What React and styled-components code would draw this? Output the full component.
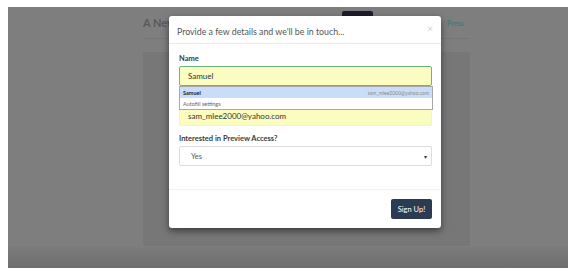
import React from "react";
import styled, { createGlobalStyle } from "styled-components";

const GlobalStyle = createGlobalStyle`
  html, body { margin: 0; padding: 0; background: #fff; }
  body { font-family: "Lato", "Open Sans", sans-serif; }
  * { box-sizing: border-box; }
`;

export default function App() {
  return (
    <>
      <GlobalStyle />
      <Frame>
        <PageArea>
          <Container>
            <SiteHeader>
              <SiteTitle>A New Era</SiteTitle>
              <NavButton />
              <PressLink>Press</PressLink>
            </SiteHeader>
            <Panel />
          </Container>
        </PageArea>
        <BottomBand />

        <Modal>
          <ModalHeader>
            <ModalTitle>Provide a few details and we'll be in touch...</ModalTitle>
            <CloseButton>×</CloseButton>
          </ModalHeader>
          <ModalBody>
            <FormGroup>
              <Label>Name</Label>
              <Input autofilled focused>Samuel</Input>
              <Autofill>
                <AutofillRow selected>
                  <strong>Samuel</strong>
                  <AutofillHint>sam_mlee2000@yahoo.com</AutofillHint>
                </AutofillRow>
                <AutofillRow>Autofill settings</AutofillRow>
              </Autofill>
            </FormGroup>
            <FormGroup>
              <LabelSpace />
              <Input autofilled>sam_mlee2000@yahoo.com</Input>
            </FormGroup>
            <FormGroup>
              <Label>Interested in Preview Access?</Label>
              <Select>
                <span>Yes</span>
                <Caret>▾</Caret>
              </Select>
            </FormGroup>
          </ModalBody>
          <ModalFooter>
            <PrimaryButton>Sign Up!</PrimaryButton>
          </ModalFooter>
        </Modal>
      </Frame>
    </>
  );
}

const Frame = styled.div`
  position: relative;
  margin: 7px 0 0 8px;
  width: 560px;
  height: 261px;
  background: #7e7e7e;
  display: flex;
  flex-direction: column;
  overflow: hidden;
`;

const PageArea = styled.div`
  flex: 1;
  padding-left: 135px;
`;

const Container = styled.div`
  width: 327px;
  display: flex;
  flex-direction: column;
`;

const SiteHeader = styled.div`
  height: 32px;
  display: flex;
  align-items: flex-start;
  padding-top: 9px;
  border-bottom: 1px solid #767676;
`;

const SiteTitle = styled.div`
  font-size: 11px;
  font-weight: 700;
  color: #5a5a5a;
  width: 26px;
  margin-right: 173px;
  white-space: nowrap;
  overflow: hidden;
`;

const NavButton = styled.div`
  width: 31px;
  height: 20px;
  margin-top: -5px;
  background: #1c1d28;
  border-radius: 2px;
`;

const PressLink = styled.div`
  margin-left: 74px;
  font-size: 7px;
  font-weight: 700;
  color: #4a7a70;
  padding-top: 3px;
`;

const Panel = styled.div`
  margin-top: 13px;
  height: 194px;
  background: #777;
`;

const BottomBand = styled.div`
  height: 21px;
  background: linear-gradient(#7b7b7b, #6e6e6e);
`;

const Modal = styled.div`
  position: absolute;
  left: 161px;
  top: 9px;
  width: 272px;
  background: #fff;
  border-radius: 3px;
  box-shadow: 0 3px 7px rgba(0, 0, 0, 0.5);
  display: flex;
  flex-direction: column;
`;

const ModalHeader = styled.div`
  height: 28px;
  padding: 0 8px;
  display: flex;
  align-items: center;
  justify-content: space-between;
  border-bottom: 1px solid #eaeaea;
`;

const ModalTitle = styled.div`
  font-size: 8.8px;
  color: #555;
  padding-top: 3px;
`;

const CloseButton = styled.span`
  font-size: 10px;
  color: #d0d0d0;
  margin-top: -3px;
`;

const ModalBody = styled.div`
  padding: 9px 9px 23px 10px;
  display: flex;
  flex-direction: column;
  gap: 7px;
`;

const FormGroup = styled.div`
  position: relative;
  display: flex;
  flex-direction: column;
`;

const Label = styled.div`
  font-size: 7.5px;
  font-weight: 700;
  color: #3a3a3a;
  line-height: 11px;
  margin-bottom: 2px;
`;

const LabelSpace = styled.div`
  height: 11px;
  margin-bottom: 2px;
`;

const Input = styled.div`
  height: 20px;
  display: flex;
  align-items: center;
  padding: 0 8px;
  font-size: 8px;
  color: #333;
  background: ${(p) => (p.autofilled ? "#fafcc0" : "#fff")};
  border: 1px solid ${(p) => (p.focused ? "#6ab57e" : "#f2f2dc")};
  border-radius: 2px;
`;

const Autofill = styled.div`
  position: absolute;
  left: 0;
  right: -1px;
  top: 33px;
  background: #fff;
  border: 1px solid #a8a8a8;
  z-index: 2;
`;

const AutofillRow = styled.div`
  height: 11px;
  display: flex;
  align-items: center;
  justify-content: space-between;
  padding: 0 3px;
  font-size: 5.5px;
  color: ${(p) => (p.selected ? "#222" : "#666")};
  background: ${(p) => (p.selected ? "#c9def6" : "#fff")};
`;

const AutofillHint = styled.span`
  font-size: 5px;
  color: #8a8a8a;
`;

const Select = styled.div`
  height: 20px;
  display: flex;
  align-items: center;
  justify-content: space-between;
  padding: 0 4px 0 11px;
  font-size: 7.5px;
  color: #555;
  border: 1px solid #ddd;
  border-radius: 2px;
`;

const Caret = styled.span`
  font-size: 6px;
  color: #333;
`;

const ModalFooter = styled.div`
  padding: 9px;
  display: flex;
  justify-content: flex-end;
  border-top: 1px solid #f2f2f2;
`;

const PrimaryButton = styled.button`
  width: 41px;
  height: 20px;
  border: 0;
  border-radius: 2px;
  background: #2b3b52;
  color: #fff;
  font-family: "Lato", sans-serif;
  font-size: 7.5px;
  padding: 0;
`;
